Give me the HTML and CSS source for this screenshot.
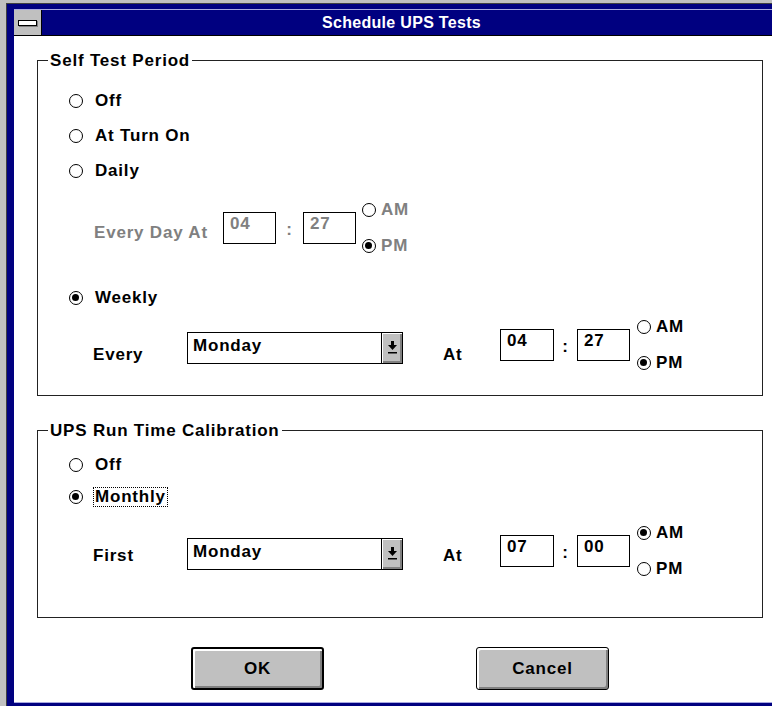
FILE: index.html
```html
<!DOCTYPE html>
<html lang="en">
<head>
<meta charset="utf-8">
<title>Schedule UPS Tests</title>
<link rel="stylesheet" href="styles.css">
</head>
<body>
<div class="window">
  <div class="titlebar">
    <div class="sysmenu"><span class="sysbar"></span></div>
    <div class="caption">Schedule UPS Tests</div>
  </div>

  <div class="client">
    <section class="group group-selftest">
      <div class="group-title">Self Test Period</div>
      <div class="group-body selftest-body">
        <div class="radio-row"><span class="radio"></span><span>Off</span></div>
        <div class="radio-row"><span class="radio"></span><span>At Turn On</span></div>
        <div class="radio-row"><span class="radio"></span><span>Daily</span></div>

        <div class="time-row daily-row disabled">
          <span class="field-label daily-label">Every Day At</span>
          <span class="edit">04</span>
          <span class="colon daily-colon">:</span>
          <span class="edit">27</span>
          <div class="ampm">
            <div class="ampm-item"><span class="radio"></span><span>AM</span></div>
            <div class="ampm-item"><span class="radio checked"></span><span>PM</span></div>
          </div>
        </div>

        <div class="radio-row weekly-row"><span class="radio checked"></span><span>Weekly</span></div>

        <div class="time-row day-row weekly-time">
          <span class="field-label day-label">Every</span>
          <div class="combo">
            <span class="combo-text">Monday</span>
            <span class="combo-btn">
              <svg width="9" height="13" viewBox="0 0 9 13"><rect x="3" y="0" width="3" height="4" fill="#000"/><path d="M0 4h9l-4.5 5z" fill="#000"/><rect x="0" y="11" width="9" height="1.5" fill="#000"/></svg>
            </span>
          </div>
          <span class="field-label at-label">At</span>
          <span class="edit edit-wide">04</span>
          <span class="colon">:</span>
          <span class="edit">27</span>
          <div class="ampm">
            <div class="ampm-item"><span class="radio"></span><span>AM</span></div>
            <div class="ampm-item"><span class="radio checked"></span><span>PM</span></div>
          </div>
        </div>
      </div>
    </section>

    <section class="group group-calib">
      <div class="group-title">UPS Run Time Calibration</div>
      <div class="group-body calib-body">
        <div class="radio-row short"><span class="radio"></span><span>Off</span></div>
        <div class="radio-row short"><span class="radio checked"></span><span class="focus">Monthly</span></div>

        <div class="time-row day-row calib-time">
          <span class="field-label day-label">First</span>
          <div class="combo">
            <span class="combo-text">Monday</span>
            <span class="combo-btn">
              <svg width="9" height="13" viewBox="0 0 9 13"><rect x="3" y="0" width="3" height="4" fill="#000"/><path d="M0 4h9l-4.5 5z" fill="#000"/><rect x="0" y="11" width="9" height="1.5" fill="#000"/></svg>
            </span>
          </div>
          <span class="field-label at-label">At</span>
          <span class="edit edit-wide">07</span>
          <span class="colon">:</span>
          <span class="edit">00</span>
          <div class="ampm">
            <div class="ampm-item"><span class="radio checked"></span><span>AM</span></div>
            <div class="ampm-item"><span class="radio"></span><span>PM</span></div>
          </div>
        </div>
      </div>
    </section>

    <div class="buttons">
      <button class="btn btn-default">OK</button>
      <button class="btn">Cancel</button>
    </div>
  </div>
</div>
</body>
</html>
```

FILE: styles.css
```css
html, body {
  margin: 0;
  height: 706px;
  overflow: hidden;
  background: #c0c0c0;
}

body {
  font-family: "Liberation Sans", Arial, sans-serif;
  font-weight: bold;
  font-size: 17px;
  letter-spacing: 0.8px;
  color: #000;
}

/* window frame: navy border, cropped at the right edge */
.window {
  margin: 3px 0 0 6px;
  border-top: 1px solid #404040;
  border-left: 1px solid #404040;
  background: #000080;
  padding: 5px 0 6px 7px;
}

.titlebar {
  display: flex;
  height: 25px;
  border-top: 1px solid #a8a8e0;
  border-bottom: 1px solid #000;
  background: #000080;
}

.sysmenu {
  width: 27px;
  background: #c0c0c0;
  border-right: 1px solid #000;
  display: flex;
  align-items: center;
  justify-content: center;
}

.sysbar {
  width: 17px;
  height: 4px;
  background: #fff;
  border: 1px solid #000;
  box-shadow: 1px 1px 0 #808080;
}

.caption {
  flex: 1;
  color: #fff;
  font-size: 16px;
  letter-spacing: 0.3px;
  text-align: center;
  line-height: 25px;
  padding-right: 11px;
}

.client {
  height: 667px;
  box-sizing: border-box;
  background: #fff;
  padding: 24px 9px 0 23px;
  border-bottom: 1px solid #a8a8e0;
}

/* group boxes */
.group {
  border: 1px solid #222;
}

.group-calib {
  margin-top: 34px;
}

.group-title {
  width: fit-content;
  margin: -10px 0 0 10px;
  padding: 0 2px;
  background: #fff;
  line-height: 20px;
}

.group-body {
  display: flex;
  flex-direction: column;
  line-height: 20px;
}

.selftest-body {
  padding: 12px 0 23px 31px;
}

.calib-body {
  padding: 8px 0 39px 31px;
}

.radio-row {
  display: flex;
  align-items: center;
  height: 35px;
}

.radio-row.short {
  height: 32px;
}

.radio-row .radio {
  margin-right: 12px;
}

.weekly-row {
  margin-top: 25px;
}

/* radio buttons */
.radio {
  position: relative;
  flex: none;
  width: 14px;
  height: 14px;
  box-sizing: border-box;
  border: 1.3px solid #000;
  border-radius: 50%;
  background: #fff;
}

.radio.checked::after {
  content: "";
  position: absolute;
  left: 2.2px;
  top: 2.2px;
  width: 7px;
  height: 7px;
  border-radius: 50%;
  background: #000;
}

.focus {
  margin-left: -2px;
  padding: 0 2px;
  outline: 1px dotted #000;
  outline-offset: -1px;
}

/* time rows */
.time-row {
  display: flex;
  align-items: center;
  height: 54px;
  margin-left: -31px;
}

.daily-row {
  margin-top: 13px;
}

.weekly-time {
  margin-top: 3px;
}

.calib-time {
  margin-top: 11px;
}

.disabled {
  color: #808080;
}

.field-label {
  margin-top: 9px;
  flex: none;
}

.weekly-time .field-label {
  margin-top: 20px;
}

.daily-label {
  margin-left: 56px;
  width: 129px;
}

.day-label {
  margin-left: 55px;
  width: 94px;
}

.at-label {
  width: 57px;
  padding-left: 40px;
}

.edit {
  flex: none;
  width: 53px;
  height: 32px;
  box-sizing: border-box;
  border: 1px solid #000;
  padding: 1px 0 0 6px;
  background: #fff;
}

.edit-wide {
  width: 54px;
}

.colon {
  flex: none;
  width: 23px;
  text-align: center;
  margin-top: 4px;
}

.daily-colon {
  width: 27px;
}

.ampm {
  display: flex;
  flex-direction: column;
  gap: 18px;
  margin-left: 7px;
}

.daily-row .ampm {
  margin-left: 6px;
}

.ampm-item {
  display: flex;
  align-items: center;
  height: 18px;
}

.ampm-item .radio {
  margin-right: 5px;
}

/* drop-down list */
.combo {
  flex: none;
  display: flex;
  width: 216px;
  height: 32px;
  box-sizing: border-box;
  border: 1px solid #000;
  margin-top: 6px;
  background: #fff;
}

.combo-text {
  flex: 1;
  padding: 3px 0 0 5px;
}

.combo-btn {
  width: 20px;
  border-left: 1px solid #000;
  background: #c0c0c0;
  box-shadow: inset 1px 1px 0 #fff, inset -2px -2px 0 #808080;
  display: flex;
  align-items: center;
  justify-content: center;
  padding-bottom: 1px;
}

/* push buttons */
.buttons {
  display: flex;
  gap: 152px;
  margin-top: 29px;
  padding-left: 154px;
}

.btn {
  width: 133px;
  height: 43px;
  box-sizing: border-box;
  font: inherit;
  letter-spacing: inherit;
  color: #000;
  background: #c0c0c0;
  border: 1px solid #000;
  border-radius: 3px;
  box-shadow: inset 1px 1px 0 #fff, inset 2px 2px 0 #fff, inset -2px -2px 0 #808080;
  padding: 0;
}

.btn-default {
  border-width: 2px;
}
```
